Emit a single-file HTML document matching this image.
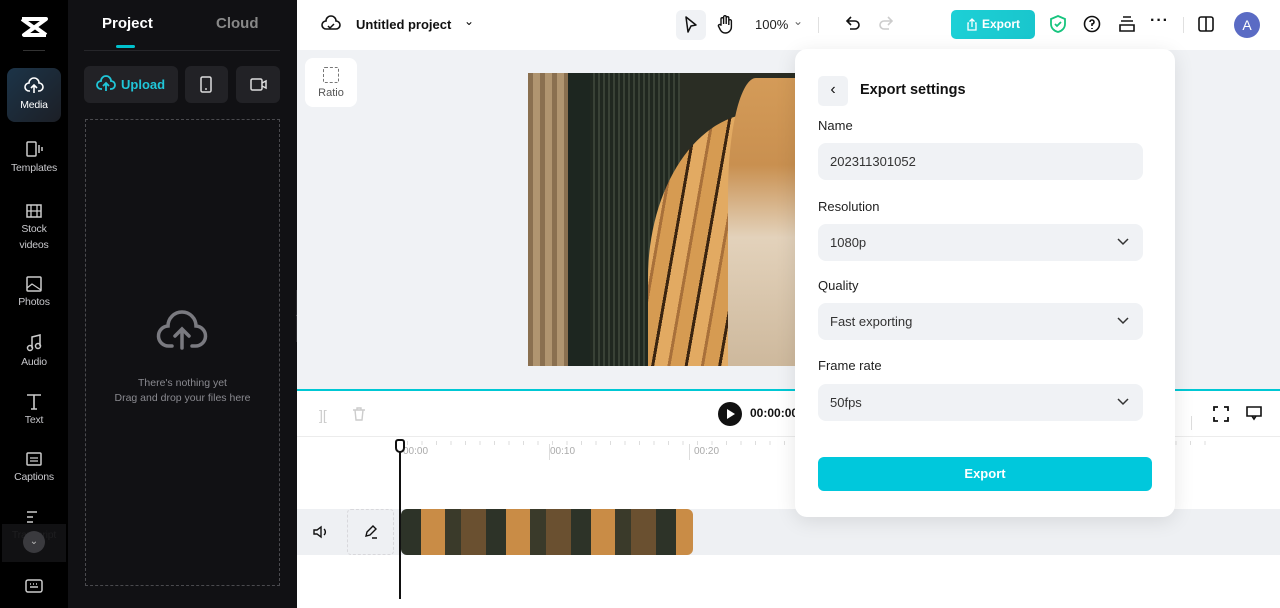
<!DOCTYPE html>
<html><head><meta charset="utf-8"><style>
*{box-sizing:border-box;margin:0;padding:0}
body{width:1280px;height:608px;overflow:hidden;font-family:"Liberation Sans",sans-serif;background:#fff;position:relative}
.abs{position:absolute}
.rail{left:0;top:0;width:68px;height:608px;background:#000}
.ri{position:absolute;left:0;width:68px;text-align:center;color:#c8c8cc;font-size:10.5px;line-height:16px;letter-spacing:-.2px}
.ri svg{display:block;margin:0 auto 2px}
.panel{left:68px;top:0;width:229px;height:608px;background:#111114}
.top{left:297px;top:0;width:983px;height:50px;background:#fff}
.canvas{left:297px;top:50px;width:983px;height:339px;background:#f0f2f5}
.sel{position:absolute;left:818px;width:325px;height:37px;background:#f0f2f5;border-radius:8px;font-size:13px;color:#333;padding:0 12px;line-height:37px}
.lbl{position:absolute;left:818px;font-size:13px;color:#1f1f1f}
.chev{position:absolute;right:14px;top:13px}
</style></head><body>
<div class="abs rail">
 <svg class="abs" style="left:19px;top:15px" width="30" height="24" viewBox="0 0 30 24"><path d="M3 4h24L5 20h22M3 4l11 8M27 20L16 12" stroke="#fff" stroke-width="4" fill="none" stroke-linejoin="round"/></svg>
 <div class="abs" style="left:23px;top:50px;width:22px;height:1px;background:#333"></div>
 <div class="abs" style="left:7px;top:68px;width:54px;height:54px;border-radius:8px;background:linear-gradient(135deg,#1c3448,#1c1f26)"></div>
 <div class="ri" style="top:77px;color:#fff"><svg width="20" height="18" viewBox="0 0 20 18"><path d="M6 14H5a4 4 0 0 1 0-8 5 5 0 0 1 10 0 4 4 0 0 1 0 8h-1M10 16V9M7 11l3-3 3 3" stroke="#fff" stroke-width="1.6" fill="none"/></svg>Media</div>
 <div class="ri" style="top:140px"><svg width="20" height="18"><rect x="3" y="2" width="9" height="14" rx="1" stroke="#ccc" stroke-width="1.5" fill="none"/><path d="M15 5v8M18 7v4" stroke="#ccc" stroke-width="1.5"/></svg>Templates</div>
 <div class="ri" style="top:203px"><svg width="20" height="16"><rect x="3" y="2" width="14" height="12" stroke="#ccc" stroke-width="1.5" fill="none"/><path d="M7 2v12M13 2v12M3 8h14" stroke="#ccc" stroke-width="1.3"/></svg>Stock<br>videos</div>
 <div class="ri" style="top:276px"><svg width="20" height="16"><rect x="3" y="1" width="14" height="14" rx="1" stroke="#ccc" stroke-width="1.5" fill="none"/><path d="M3 12l5-4 9 6" stroke="#ccc" stroke-width="1.3" fill="none"/></svg>Photos</div>
 <div class="ri" style="top:334px"><svg width="20" height="18"><path d="M8 14V3l8-2v11" stroke="#ccc" stroke-width="1.5" fill="none"/><circle cx="6" cy="14" r="2.5" stroke="#ccc" stroke-width="1.5" fill="none"/><circle cx="14" cy="12" r="2.5" stroke="#ccc" stroke-width="1.5" fill="none"/></svg>Audio</div>
 <div class="ri" style="top:392px"><svg width="20" height="18"><path d="M3 3h14M10 3v14M7 17h6" stroke="#ccc" stroke-width="1.6"/></svg>Text</div>
 <div class="ri" style="top:451px"><svg width="20" height="16"><rect x="3" y="2" width="14" height="12" rx="1" stroke="#ccc" stroke-width="1.5" fill="none"/><path d="M6 7h8M6 10h8" stroke="#ccc" stroke-width="1.3"/></svg>Captions</div>
 <div class="ri" style="top:509px;color:#555"><svg width="20" height="16"><path d="M3 3h10M3 8h6M3 13h6" stroke="#ccc" stroke-width="1.4"/></svg>Transcript</div>
 <div class="abs" style="left:2px;top:524px;width:64px;height:38px;background:rgba(20,20,22,.85)"></div>
 <div class="abs" style="left:23px;top:531px;width:22px;height:22px;border-radius:50%;background:#3a3a3e;color:#bbb;font-size:10px;text-align:center;line-height:22px">⌄</div>
 <svg class="abs" style="left:24px;top:578px" width="20" height="16"><rect x="2" y="2" width="16" height="12" rx="2" stroke="#ccc" stroke-width="1.5" fill="none"/><path d="M6 6h1M9 6h1M12 6h1M6 9h8" stroke="#ccc" stroke-width="1.4"/></svg>
</div>
<div class="abs panel">
 <div class="abs" style="left:34px;top:15px;color:#fff;font-weight:bold;font-size:15px">Project</div>
 <div class="abs" style="left:148px;top:15px;color:#888;font-weight:bold;font-size:15px">Cloud</div>
 <div class="abs" style="left:48px;top:45px;width:19px;height:3px;background:#00c1cd;border-radius:2px"></div>
 <div class="abs" style="left:16px;top:50px;width:196px;height:1px;background:#26262a"></div>
 <div class="abs" style="left:16px;top:66px;width:94px;height:37px;background:#222226;border-radius:6px;color:#20c6d8;font-weight:bold;font-size:13px;line-height:37px;padding-left:37px">Upload
  <svg class="abs" style="left:12px;top:9px" width="20" height="18" viewBox="0 0 20 18"><path d="M6 14H5a4 4 0 0 1 0-8 5 5 0 0 1 10 0 4 4 0 0 1 0 8h-1M10 16V9M7 11l3-3 3 3" stroke="#20c6d8" stroke-width="1.8" fill="none"/></svg></div>
 <div class="abs" style="left:117px;top:66px;width:43px;height:37px;background:#222226;border-radius:6px"><svg class="abs" style="left:14px;top:10px" width="14" height="18"><rect x="2" y="1" width="10" height="15" rx="1.5" stroke="#ddd" stroke-width="1.5" fill="none"/><path d="M6 13h2" stroke="#ddd" stroke-width="1.4"/></svg></div>
 <div class="abs" style="left:168px;top:66px;width:44px;height:37px;background:#222226;border-radius:6px"><svg class="abs" style="left:13px;top:11px" width="20" height="16"><rect x="2" y="2" width="11" height="11" rx="1.5" stroke="#ddd" stroke-width="1.5" fill="none"/><path d="M13 6l4-2v7l-4-2" stroke="#ddd" stroke-width="1.5" fill="none"/></svg></div>
 <div class="abs" style="left:17px;top:119px;width:195px;height:467px;border:1px dashed #4a4a4e"></div>
 <svg class="abs" style="left:88px;top:306px" width="52" height="46" viewBox="0 0 52 46"><path d="M16 40h-3a10 10 0 0 1-1-20 14 14 0 0 1 28 0 10 10 0 0 1-1 20h-3M26 42V24M19 30l7-7 7 7" stroke="#7a7a80" stroke-width="3.5" fill="none" stroke-linecap="round"/></svg>
 <div class="abs" style="left:17px;top:376px;width:195px;text-align:center;color:#8a8a90;font-size:10.5px;line-height:15px">There's nothing yet<br>Drag and drop your files here</div>
</div>
<div class="abs" style="left:296px;top:290px;width:8px;height:52px;background:#2a2a2e;border-radius:0 6px 6px 0;color:#888;font-size:10px;line-height:52px">‹</div>
<div class="abs top">
 <svg class="abs" style="left:24px;top:15px" width="20" height="18" viewBox="0 0 20 18"><path d="M6 14H5a4 4 0 0 1 0-8 5 5 0 0 1 10 0 4 4 0 0 1 0 8H6" stroke="#111" stroke-width="1.6" fill="none"/><path d="M7 11l2 2 4-4" stroke="#111" stroke-width="1.5" fill="none"/></svg>
 <div class="abs" style="left:59px;top:17px;font-size:13px;font-weight:bold;color:#111">Untitled project</div>
 <div class="abs" style="left:167px;top:14px;font-size:12px">⌄</div>
 <div class="abs" style="left:379px;top:10px;width:30px;height:30px;background:#f0f2f5;border-radius:6px"></div>
 <svg class="abs" style="left:386px;top:15px" width="16" height="20"><path d="M3 2l10 8-5 1-3 6z" stroke="#111" stroke-width="1.5" fill="none" stroke-linejoin="round"/></svg>
 <svg class="abs" style="left:419px;top:14px" width="18" height="20"><path d="M5 11V5a1.3 1.3 0 0 1 2.6 0v5V3a1.3 1.3 0 0 1 2.6 0v7V4a1.3 1.3 0 0 1 2.6 0v7V7a1.3 1.3 0 0 1 2.6 0v6a6 6 0 0 1-6 6 6 6 0 0 1-5-3l-2-4a1.3 1.3 0 0 1 2.3-1z" stroke="#111" stroke-width="1.4" fill="none"/></svg>
 <div class="abs" style="left:458px;top:17px;font-size:13px;color:#222">100%</div>
 <div class="abs" style="left:496px;top:14px;font-size:12px;color:#666">⌄</div>
 <div class="abs" style="left:521px;top:17px;width:1px;height:16px;background:#e0e0e0"></div>
 <svg class="abs" style="left:547px;top:15px" width="18" height="18"><path d="M4 6h7a4 4 0 0 1 0 8H6M7 2L3 6l4 4" stroke="#111" stroke-width="1.6" fill="none"/></svg>
 <svg class="abs" style="left:580px;top:15px" width="18" height="18"><path d="M14 6H7a4 4 0 0 0 0 8h5M11 2l4 4-4 4" stroke="#ccc" stroke-width="1.6" fill="none"/></svg>
 <div class="abs" style="left:654px;top:10px;width:84px;height:29px;background:linear-gradient(90deg,#1dd0d6,#19c6cd);border-radius:5px;color:#fff;font-weight:bold;font-size:12px;line-height:29px;padding-left:31px">Export
  <svg class="abs" style="left:15px;top:8px" width="12" height="13"><path d="M3 5H2v7h8V5H9M6 9V1M3.5 3.5L6 1l2.5 2.5" stroke="#fff" stroke-width="1.3" fill="none"/></svg></div>
 <svg class="abs" style="left:752px;top:14px" width="18" height="20"><path d="M9 2l7 3v5c0 4-3 7-7 8-4-1-7-4-7-8V5z" stroke="#16c47e" stroke-width="1.8" fill="none"/><path d="M6 10l2 2 4-4" stroke="#16c47e" stroke-width="1.8" fill="none"/></svg>
 <svg class="abs" style="left:786px;top:15px" width="18" height="18"><circle cx="9" cy="9" r="7.5" stroke="#111" stroke-width="1.6" fill="none"/><path d="M7 7a2 2 0 1 1 2 2v2M9 13v1" stroke="#111" stroke-width="1.6" fill="none"/></svg>
 <svg class="abs" style="left:821px;top:15px" width="18" height="18"><path d="M5 2h8M3 6h12M2 10h14v6H2z" stroke="#111" stroke-width="1.6" fill="none"/></svg>
 <div class="abs" style="left:853px;top:12px;font-size:16px;color:#111;font-weight:bold;letter-spacing:1px">···</div>
 <div class="abs" style="left:886px;top:17px;width:1px;height:16px;background:#e0e0e0"></div>
 <svg class="abs" style="left:900px;top:15px" width="18" height="18"><rect x="2" y="2" width="14" height="14" rx="2" stroke="#111" stroke-width="1.6" fill="none"/><path d="M9 2v14" stroke="#111" stroke-width="1.6"/></svg>
 <div class="abs" style="left:937px;top:12px;width:26px;height:26px;border-radius:50%;background:#5a6bc4;color:#fff;font-size:14px;text-align:center;line-height:26px">A</div>
</div>
<div class="abs canvas">
 <div class="abs" style="left:8px;top:8px;width:52px;height:49px;background:#fff;border-radius:8px;text-align:center;font-size:11px;color:#555">
  <div style="width:16px;height:16px;border:1.5px dashed #777;margin:9px auto 4px;border-radius:2px"></div>Ratio</div>
 <div class="abs" style="left:231px;top:23px;width:267px;height:293px;overflow:hidden;background:#2a2d24">
  <div class="abs" style="left:0;top:0;width:40px;height:293px;background:repeating-linear-gradient(90deg,#8a7050 0 5px,#b09570 5px 12px)"></div>
  <div class="abs" style="left:40px;top:0;width:22px;height:293px;background:#1d2620"></div>
  <div class="abs" style="left:62px;top:0;width:90px;height:293px;background:repeating-linear-gradient(90deg,#202820 0 3px,#394236 3px 5px)"></div>
  <div class="abs" style="left:120px;top:40px;width:220px;height:330px;border-radius:50% 40% 0 0;background:repeating-linear-gradient(100deg,#d69b52 0 14px,#3a2410 14px 17px,#e2aa62 17px 30px,#a8703a 30px 33px)"></div>
  <div class="abs" style="left:200px;top:5px;width:70px;height:290px;border-radius:40% 0 0 0;background:linear-gradient(180deg,#d49b58 0,#c99050 30%,#e3d2bb 55%,#cdb89c)"></div>
 </div>
</div>
<div class="abs" style="left:297px;top:389px;width:983px;height:2px;background:#00c8d4"></div>
<div class="abs" style="left:297px;top:391px;width:983px;height:217px;background:#fff">
 <div class="abs" style="left:22px;top:16px;color:#ccc;font-size:14px">][</div>
 <svg class="abs" style="left:54px;top:15px" width="16" height="16"><path d="M2 4h12M4 4l1 10h6l1-10M6 4V2h4v2" stroke="#ccc" stroke-width="1.4" fill="none"/></svg>
 <div class="abs" style="left:421px;top:11px;width:24px;height:24px;border-radius:50%;background:#111"><svg class="abs" style="left:8px;top:7px" width="10" height="10"><path d="M1 0l8 5-8 5z" fill="#fff"/></svg></div>
 <div class="abs" style="left:453px;top:15px;font-size:12px;font-weight:bold;color:#111">00:00:00</div>
 <div class="abs" style="left:0;top:45px;width:983px;height:1px;background:#ececec"></div>
 <div class="abs" style="left:106px;top:55px;font-size:10px;color:#aaa">00:00</div>
 <div class="abs" style="left:252px;top:53px;width:1px;height:16px;background:#ddd"></div>
 <div class="abs" style="left:253px;top:55px;font-size:10px;color:#aaa">00:10</div>
 <div class="abs" style="left:392px;top:53px;width:1px;height:16px;background:#ddd"></div>
 <div class="abs" style="left:397px;top:55px;font-size:10px;color:#aaa">00:20</div>
 <div class="abs" style="left:110px;top:50px;width:800px;height:4px;background:repeating-linear-gradient(90deg,#ddd 0 1px,transparent 1px 14.5px)"></div>
 <div class="abs" style="left:0;top:118px;width:983px;height:46px;background:#eef0f3"></div>
 <svg class="abs" style="left:15px;top:133px" width="16" height="16"><path d="M2 6h3l4-3v10l-4-3H2zM12 5a4 4 0 0 1 0 6" stroke="#111" stroke-width="1.4" fill="none"/></svg>
 <div class="abs" style="left:50px;top:118px;width:47px;height:46px;background:#eef0f3;border:1px dashed #d8d8dc;border-radius:4px"><svg class="abs" style="left:15px;top:14px" width="16" height="16"><path d="M3 12l1-4 6-6 3 3-6 6zM9 14h5" stroke="#111" stroke-width="1.4" fill="none"/></svg></div>
 <div class="abs" style="left:104px;top:118px;width:292px;height:46px;border-radius:6px;overflow:hidden;background:repeating-linear-gradient(90deg,#2d3328 0 20px,#c98c46 20px 44px,#3a3a2a 44px 60px,#6a5030 60px 85px)"></div>
 <div class="abs" style="left:98px;top:48px;width:10px;height:14px;border:2px solid #111;border-radius:3px 3px 5px 5px;background:#fff"></div>
 <div class="abs" style="left:102px;top:60px;width:2px;height:148px;background:#111"></div>
 <div class="abs" style="left:894px;top:25px;width:1px;height:14px;background:#ddd"></div>
 <svg class="abs" style="left:915px;top:14px" width="18" height="18"><path d="M2 6V2h4M12 2h4v4M16 12v4h-4M6 16H2v-4" stroke="#111" stroke-width="1.8" fill="none"/></svg>
 <svg class="abs" style="left:948px;top:14px" width="18" height="18"><path d="M2 2h14v9H2zM7 11l2 3 2-3" stroke="#111" stroke-width="1.6" fill="none"/></svg>
</div>
<div class="abs" style="left:795px;top:49px;width:380px;height:468px;background:#fff;border-radius:12px;box-shadow:0 4px 20px rgba(0,0,0,.1)"></div>
<div class="abs" style="left:818px;top:76px;width:30px;height:30px;background:#f0f2f5;border-radius:5px;text-align:center;line-height:28px;font-size:16px;color:#111">‹</div>
<div class="abs" style="left:860px;top:82px;font-size:14.5px;font-weight:bold;color:#111">Export settings</div>
<div class="lbl" style="top:118px">Name</div>
<div class="sel" style="top:143px">202311301052</div>
<div class="lbl" style="top:199px">Resolution</div>
<div class="sel" style="top:224px">1080p<svg class="chev" width="12" height="10"><path d="M1 2l5 5 5-5" stroke="#333" stroke-width="1.5" fill="none"/></svg></div>
<div class="lbl" style="top:278px">Quality</div>
<div class="sel" style="top:303px">Fast exporting<svg class="chev" width="12" height="10"><path d="M1 2l5 5 5-5" stroke="#333" stroke-width="1.5" fill="none"/></svg></div>
<div class="lbl" style="top:358px">Frame rate</div>
<div class="sel" style="top:384px">50fps<svg class="chev" width="12" height="10"><path d="M1 2l5 5 5-5" stroke="#333" stroke-width="1.5" fill="none"/></svg></div>
<div class="abs" style="left:818px;top:457px;width:334px;height:34px;background:#00c8dc;border-radius:6px;color:#fff;font-weight:bold;font-size:13px;text-align:center;line-height:34px">Export</div>
</body></html>
